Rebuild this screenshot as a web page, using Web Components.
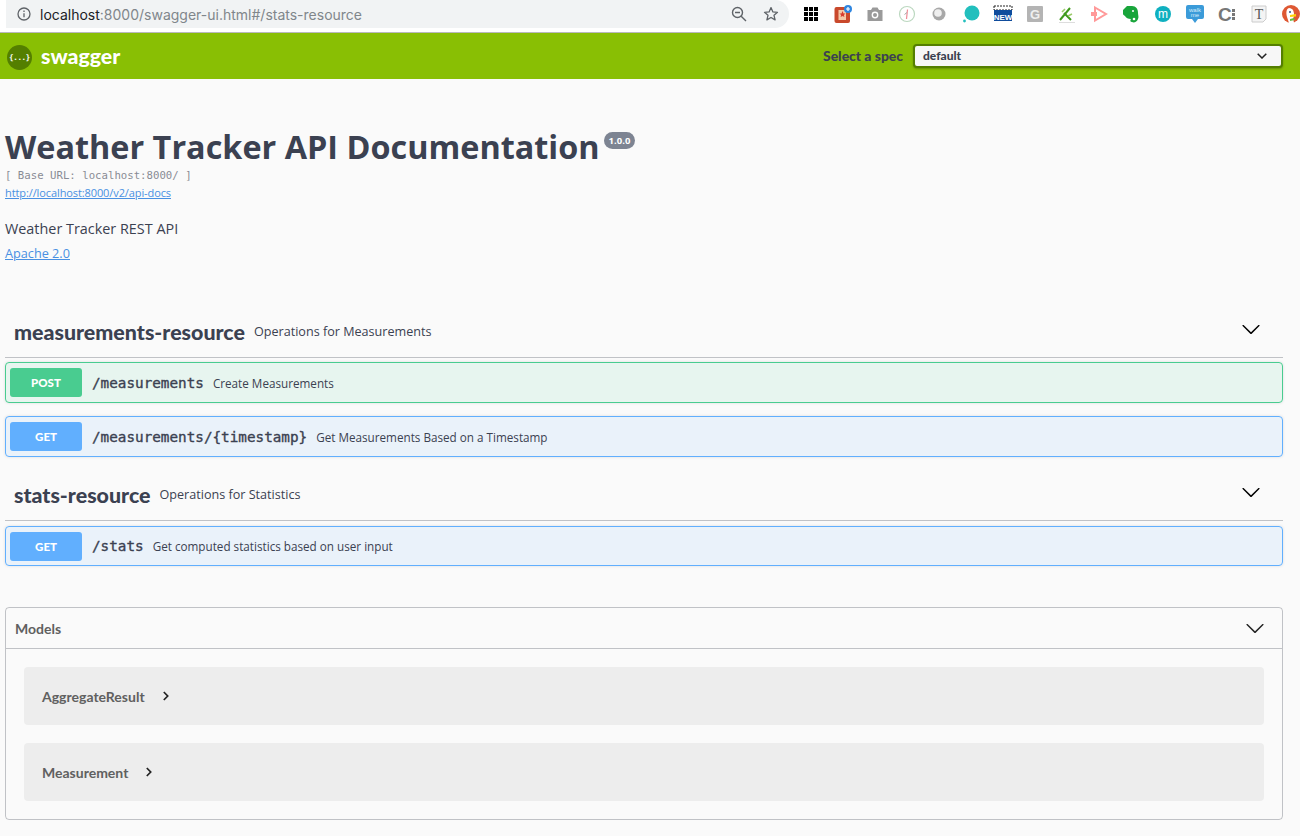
<!DOCTYPE html>
<html>
<head>
<meta charset="utf-8">
<title>Swagger UI</title>
<style>
  html, body { margin: 0; padding: 0; background: #fafafa; overflow: hidden; }
  body { font-family: "Open Sans", sans-serif; color: #3b4151; }
  op-tag + op-tag { margin-top: 14px; --tag-gap: 5px; }
  op-tag + op-tag op-block { height: 40px; }
</style>
</head>
<body>
<browser-bar url-host="localhost" url-rest=":8000/swagger-ui.html#/stats-resource"></browser-bar>
<swagger-topbar></swagger-topbar>
<page-wrap>
  <api-info></api-info>
  <op-tag name="measurements-resource" desc="Operations for Measurements">
    <op-block method="post" path="/measurements" summary="Create Measurements"></op-block>
    <op-block method="get" path="/measurements/{timestamp}" summary="Get Measurements Based on a Timestamp"></op-block>
  </op-tag>
  <op-tag name="stats-resource" desc="Operations for Statistics">
    <op-block method="get" path="/stats" summary="Get computed statistics based on user input"></op-block>
  </op-tag>
  <models-box>
    <model-row name="AggregateResult"></model-row>
    <model-row name="Measurement"></model-row>
  </models-box>
</page-wrap>

<script>
const downArrow = `<svg width="20" height="20" viewBox="0 0 20 20"><path d="M17.418 6.109c.272-.268.709-.268.979 0s.271.701 0 .969l-7.908 7.83c-.27.268-.707.268-.979 0l-7.908-7.83c-.27-.268-.27-.701 0-.969.271-.268.709-.268.979 0L10 13.25l7.418-7.141z"/></svg>`;

class BrowserBar extends HTMLElement {
  constructor() {
    super();
    this.attachShadow({ mode: "open" });
    this.shadowRoot.innerHTML = `
      <style>
        :host { display: flex; height: 32px; background: #fff; border-bottom: 1px solid #b9b9bd; align-items: flex-start; overflow: hidden; }
        #pill { box-sizing: border-box; margin-left: 6px; width: 783px; height: 28px; background: #f1f3f4; border-radius: 0 14px 14px 0; display: flex; align-items: center; padding: 0 10px 0 11px; font: 14px "Inter", sans-serif; color: #80868b; white-space: nowrap; flex: none; }
        #pill b { font-weight: 400; color: #202124; }
        #url { margin-left: 9px; flex: 1; }
        #pill svg { flex: none; display: block; }
        #pill svg + svg { margin-left: 16px; }
        #exts { display: flex; margin-left: 12px; gap: 12px; height: 28px; align-items: center; flex: none; }
        #exts svg { flex: none; display: block; }
        text { font-family: "Liberation Sans", sans-serif; }
      </style>
      <div id="pill">
        <svg width="14" height="14" viewBox="0 0 14 14" fill="none" stroke="#5f6368" stroke-width="1.3"><circle cx="7" cy="7" r="6"/><path d="M7 6.2v4M7 3.6v1.3"/></svg>
        <span id="url"><b>${this.getAttribute("url-host")}</b>${this.getAttribute("url-rest")}</span>
        <svg width="16" height="16" viewBox="0 0 16 16" fill="none" stroke="#5f6368" stroke-width="1.4"><circle cx="6.5" cy="6.5" r="5"/><path d="M10.2 10.2L15 15M4 6.5h5"/></svg>
        <svg width="16" height="16" viewBox="0 0 16 16" fill="none" stroke="#5f6368" stroke-width="1.3" stroke-linejoin="round"><path d="M8 1.6l1.9 4.3 4.6.4-3.5 3 1.1 4.6L8 11.5l-4.1 2.4L5 9.3l-3.5-3 4.6-.4z"/></svg>
      </div>
      <div id="exts">
        <svg width="20" height="20" viewBox="0 0 20 20" fill="#000"><path d="M3 3h4v4H3zM8 3h4v4H8zM13 3h4v4h-4zM3 8h4v4H3zM8 8h4v4H8zM13 8h4v4h-4zM3 13h4v4H3zM8 13h4v4H8zM13 13h4v4h-4z"/></svg>
        <svg width="20" height="20" viewBox="0 0 20 20"><rect x="1.500" y="3" width="15.500" height="16" rx="2" fill="#c9492c"/><rect x="5.500" y="6" width="7.500" height="10" fill="#f3c9a8"/><path d="M9.500 7l1 2.400 2 .2-1.600 1.400.5 2-1.900-1.100-1.900 1.100.5-2L6.500 9.600l2-.2z" fill="#d83b2c"/><circle cx="15" cy="5" r="4" fill="#2f86e0"/><path d="M15 3v4M13 5h4" stroke="#fff" stroke-width="1.200"/></svg>
        <svg width="20" height="20" viewBox="0 0 20 20"><path d="M2.500 6h3.500l1.500-2.500h5L14 6h3.500v11h-15z" fill="#9a9a9a"/><circle cx="10" cy="11" r="3.400" fill="#fff"/><circle cx="10" cy="11" r="2" fill="#9a9a9a"/></svg>
        <svg width="20" height="20" viewBox="0 0 20 20"><circle cx="10" cy="10" r="7.500" fill="#fff" stroke="#bcd8c0" stroke-width="1.200"/><path d="M10.500 5.500L9.500 15" stroke="#ee8a96" stroke-width="1.200"/><path d="M7.500 10.500l2.500-2" stroke="#a5a5a5" stroke-width="1"/></svg>
        <svg width="20" height="20" viewBox="0 0 20 20"><circle cx="10" cy="10" r="6.500" fill="#a8a8a8"/><circle cx="9" cy="9" r="3.800" fill="#efefef"/></svg>
        <svg width="20" height="20" viewBox="0 0 20 20"><circle cx="11" cy="9" r="7.500" fill="#22bfbd"/><circle cx="3.500" cy="17" r="1.400" fill="#22bfbd"/></svg>
        <svg width="20" height="20" viewBox="0 0 20 20"><rect x="1" y="2" width="18" height="4" fill="#fff" stroke="#222" stroke-width="1" stroke-dasharray="2 1"/><rect x="1" y="6" width="18" height="11" fill="#0f4c9c"/><text x="10" y="16" font-size="8" font-weight="700" fill="#fff" text-anchor="middle">NEW</text></svg>
        <svg width="20" height="20" viewBox="0 0 20 20"><rect x="2" y="2" width="16" height="16" rx="1" fill="#b4b4b4"/><text x="10" y="15" font-size="13" font-weight="700" fill="#efefef" text-anchor="middle">G</text></svg>
        <svg width="20" height="20" viewBox="0 0 20 20" fill="none"><path d="M3 16L13 4M7 9l7 7" stroke="#3f9a1d" stroke-width="2"/><path d="M5 8l3-3M11 12l4-2" stroke="#9ccb6a" stroke-width="1.600"/><path d="M2 18.500h16" stroke="#ddd"/></svg>
        <svg width="20" height="20" viewBox="0 0 20 20" fill="none"><path d="M6 3.500L17 10 6 16.500z" stroke="#f99" stroke-width="2"/><path d="M2 8h6v4H2z" fill="#f99"/></svg>
        <svg width="20" height="20" viewBox="0 0 20 20"><path d="M2 6l4-4h5c4 0 6 3 6 7 0 2 1 4 0 6-1 3-4 4-6 3-2 0-2-2-1-3-3 0-5-1-6-3-1-1-2-1-2-2z" fill="#19a53b"/><circle cx="12" cy="7" r="1" fill="#fff"/><circle cx="13" cy="15" r="1.300" fill="#fff"/></svg>
        <svg width="20" height="20" viewBox="0 0 20 20"><circle cx="10" cy="10" r="8" fill="#0fb0c0"/><text x="10" y="14" font-size="12" fill="#fff" text-anchor="middle">m</text></svg>
        <svg width="20" height="20" viewBox="0 0 20 20"><path d="M3 1h14a2 2 0 0 1 2 2v10a2 2 0 0 1-2 2h-4l-3 4-3-4H3a2 2 0 0 1-2-2V3a2 2 0 0 1 2-2z" fill="#3b9bd9"/><text x="10" y="7.500" font-size="6" fill="#d6ecfa" text-anchor="middle">walk</text><text x="10" y="13" font-size="6" fill="#d6ecfa" text-anchor="middle">me</text></svg>
        <svg width="20" height="20" viewBox="0 0 20 20"><text x="1" y="17" font-size="19" font-weight="700" fill="#777">C</text><path d="M15 5h3v3h-3zM15 9h3v3h-3zM15 13h3v3h-3z" fill="#777"/></svg>
        <svg width="20" height="20" viewBox="0 0 20 20"><path d="M3 2h14v13l-3 3H3z" fill="#f4f4f4" stroke="#ccc"/><text x="10" y="15" font-size="14" fill="#555" text-anchor="middle" style="font-family:'Liberation Serif',serif">T</text></svg>
        <svg width="20" height="20" viewBox="0 0 20 20"><circle cx="10" cy="10" r="9" fill="#de5833"/><path d="M8 4c-3 1-3 5-2 9l2 6h5l-1-5c2-1 1-6 0-8-1-1-2-2-4-2z" fill="#fff"/><circle cx="9" cy="8" r="1" fill="#2d4f8e"/><path d="M9 11l6-1v2.500l-6 .5z" fill="#fdd209"/><path d="M9 15l4-1 1 2-5 1z" fill="#65bc46"/></svg>
      </div>`;
  }
}

class SwaggerTopbar extends HTMLElement {
  constructor() {
    super();
    this.attachShadow({ mode: "open" });
    this.shadowRoot.innerHTML = `
      <style>
        :host { display: flex; align-items: center; height: 46px; background: #89bf04; padding: 0 17px 0 7px; }
        #logo { display: flex; align-items: center; flex: 1; color: #fff; font: 900 21.3px "Lato", sans-serif; }
        #logo svg { margin: 2px 9px 0 0; display: block; }
        #logo text { font: 700 7.500px "DejaVu Sans Mono", monospace; letter-spacing: -.3px; }
        label { font: 900 13.900px "Lato", sans-serif; color: #3b4151; margin-right: 10px; margin-bottom: 1px; }
        #select { box-sizing: border-box; width: 370px; height: 24px; background: #f7f7f7; border: 2px solid #547f00; border-radius: 4px; display: flex; align-items: center; justify-content: space-between; padding: 0 14px 1px 8px; font: 900 12px "Lato", sans-serif; color: #3b4151; box-shadow: 0 1px 2px rgba(0,0,0,.25); }
        #select svg { display: block; }
      </style>
      <div id="logo">
        <svg width="25" height="25" viewBox="0 0 25 25"><circle cx="12.500" cy="12.500" r="12.500" fill="#547f00"/><text x="12.500" y="15.200" fill="#fff" text-anchor="middle">{...}</text></svg>
        <span>swagger</span>
      </div>
      <label>Select a spec</label>
      <div id="select"><span>default</span><svg width="10" height="6" viewBox="0 0 10 6" fill="none" stroke="#222" stroke-width="1.500"><path d="M.7.7L5 5l4.300-4.300"/></svg></div>`;
  }
}

class PageWrap extends HTMLElement {
  constructor() {
    super();
    this.attachShadow({ mode: "open" });
    this.shadowRoot.innerHTML = `
      <style>
        :host { display: block; padding: 0 17px 0 5px; }
      </style>
      <slot></slot>`;
  }
}

class ApiInfo extends HTMLElement {
  constructor() {
    super();
    this.attachShadow({ mode: "open" });
    this.shadowRoot.innerHTML = `
      <style>
        :host { display: block; padding: 46px 0 45px; }
        h2 { margin: 0; font: 700 32.400px/42px "Open Sans", sans-serif; color: #3b4151; display: flex; align-items: flex-start; }
        small { font: 700 9.500px/13px "Open Sans", sans-serif; background: #7d8492; color: #fff; border-radius: 57px; padding: 2px 5px; margin: 7px 0 0 4px; }
        pre { margin: 2px 0 0; font: 10.700px/14px "DejaVu Sans Mono", monospace; color: #3b4151; opacity: .6; }
        a { color: #4990e2; }
        #url { font-size: 11px; letter-spacing: -.1px; line-height: 16px; margin-top: 2px; }
        #desc { font-size: 14.400px; line-height: 20px; margin-top: 18px; }
        #lic { font-size: 12.700px; line-height: 20px; margin-top: 4px; }
      </style>
      <h2>Weather Tracker API Documentation<small>1.0.0</small></h2>
      <pre>[ Base URL: localhost:8000/ ]</pre>
      <div id="url"><a href="#">http://localhost:8000/v2/api-docs</a></div>
      <div id="desc">Weather Tracker REST API</div>
      <div id="lic"><a href="#">Apache 2.0</a></div>`;
  }
}

class OpTag extends HTMLElement {
  constructor() {
    super();
    this.attachShadow({ mode: "open" });
    this.shadowRoot.innerHTML = `
      <style>
        :host { display: block; }
        header { box-sizing: border-box; display: flex; align-items: center; height: 50px; padding: 0 22px 1px 9px; border-bottom: 1px solid rgba(59,65,81,.3); margin-bottom: var(--tag-gap, 4px); }
        h4 { margin: 0 0 1px; font: 900 21.400px "Lato", sans-serif; color: #3b4151; }
        small { flex: 1; margin-left: 9px; font: 12.600px "Open Sans", sans-serif; color: #3b4151; padding-bottom: 2px; }
        svg { display: block; margin-bottom: 6px; }
      </style>
      <header>
        <h4>${this.getAttribute("name")}</h4>
        <small>${this.getAttribute("desc")}</small>
        ${downArrow}
      </header>
      <slot></slot>`;
  }
}

class OpBlock extends HTMLElement {
  constructor() {
    super();
    this.attachShadow({ mode: "open" });
    const m = this.getAttribute("method");
    this.shadowRoot.innerHTML = `
      <style>
        :host { display: flex; box-sizing: border-box; align-items: center; height: 41px; margin-bottom: 13px; padding: 0 4px; border: 1px solid; border-radius: 4px; box-shadow: 0 0 3px rgba(0,0,0,.12); }
        :host([method=post]) { background: rgba(73,204,144,.1); border-color: #49cc90; }
        :host([method=get]) { background: rgba(97,175,254,.1); border-color: #61affe; }
        :host([method=post]) b { background: #49cc90; }
        :host([method=get]) b { background: #61affe; }
        b { width: 72px; height: 29px; border-radius: 3px; color: #fff; font: 900 11.500px/29px "Lato", sans-serif; text-align: center; flex: none; }
        code { margin-left: 10px; font: 400 14.300px "DejaVu Sans Mono", monospace; -webkit-text-stroke: .35px #3b4151; color: #3b4151; }
        span { margin-left: 9px; font: 11.700px "Open Sans", sans-serif; color: #3b4151; }
      </style>
      <b>${m.toUpperCase()}</b>
      <code>${this.getAttribute("path")}</code>
      <span>${this.getAttribute("summary")}</span>`;
  }
}

class ModelsBox extends HTMLElement {
  constructor() {
    super();
    this.attachShadow({ mode: "open" });
    this.shadowRoot.innerHTML = `
      <style>
        :host { display: block; box-sizing: border-box; margin-top: 41px; height: 213px; border: 1px solid rgba(59,65,81,.3); border-radius: 4px; }
        header { display: flex; align-items: center; justify-content: space-between; height: 40px; padding: 0 17px 0 9px; border-bottom: 1px solid rgba(59,65,81,.3); font: 700 14px "Lato", sans-serif; color: #606060; }
        svg { display: block; fill: #222; }
        #list { display: flex; flex-direction: column; gap: 18px; padding: 18px 18px 0; }
      </style>
      <header>Models ${downArrow}</header>
      <div id="list"><slot></slot></div>`;
  }
}

class ModelRow extends HTMLElement {
  constructor() {
    super();
    this.attachShadow({ mode: "open" });
    this.shadowRoot.innerHTML = `
      <style>
        :host { display: flex; align-items: center; height: 58px; padding-left: 18px; background: rgba(0,0,0,.05); border-radius: 4px; font: 700 14px "Lato", sans-serif; color: #606060; }
        svg { margin-left: 18px; display: block; }
      </style>
      <span>${this.getAttribute("name")}</span>
      <svg width="6" height="10" viewBox="0 0 6 10" fill="none" stroke="#222" stroke-width="1.700"><path d="M.8 1L4.700 5 .8 9"/></svg>`;
  }
}

customElements.define("browser-bar", BrowserBar);
customElements.define("swagger-topbar", SwaggerTopbar);
customElements.define("page-wrap", PageWrap);
customElements.define("api-info", ApiInfo);
customElements.define("op-tag", OpTag);
customElements.define("op-block", OpBlock);
customElements.define("models-box", ModelsBox);
customElements.define("model-row", ModelRow);
</script>
</body>
</html>
